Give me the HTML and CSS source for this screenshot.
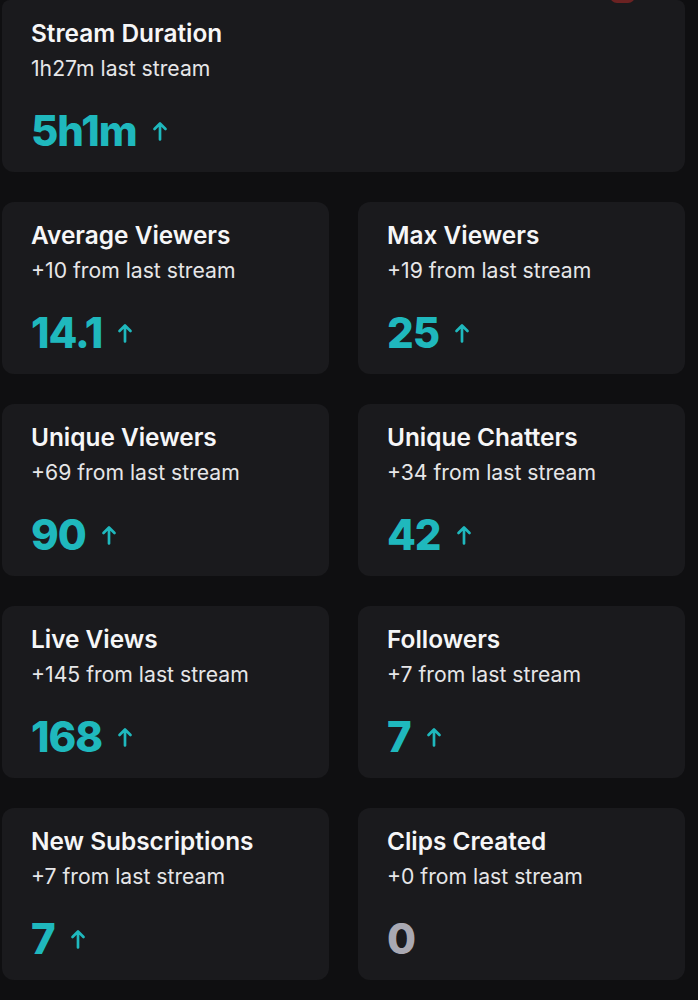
FILE: index.html
```html
<!DOCTYPE html>
<html lang="en">
<head>
    <meta charset="UTF-8">
    <meta name="viewport" content="width=device-width, initial-scale=1.0">
    <title>Stream Stats</title>
    <link rel="stylesheet" href="styles.css">
</head>
<body>
    <div class="grid">
        <div class="card wide">
            <span class="badge"></span>
            <div class="title">Stream Duration</div>
            <div class="sub">1h27m last stream</div>
            <div class="value">5h1m <svg class="arrow" viewBox="0 0 16 20"><path d="M8 18.5V2.5M2.5 8L8 2.5 13.5 8"/></svg></div>
        </div>

        <div class="card">
            <div class="title">Average Viewers</div>
            <div class="sub">+10 from last stream</div>
            <div class="value">14.1 <svg class="arrow" viewBox="0 0 16 20"><path d="M8 18.5V2.5M2.5 8L8 2.5 13.5 8"/></svg></div>
        </div>
        <div class="card">
            <div class="title">Max Viewers</div>
            <div class="sub">+19 from last stream</div>
            <div class="value">25 <svg class="arrow" viewBox="0 0 16 20"><path d="M8 18.5V2.5M2.5 8L8 2.5 13.5 8"/></svg></div>
        </div>

        <div class="card">
            <div class="title">Unique Viewers</div>
            <div class="sub">+69 from last stream</div>
            <div class="value">90 <svg class="arrow" viewBox="0 0 16 20"><path d="M8 18.5V2.5M2.5 8L8 2.5 13.5 8"/></svg></div>
        </div>
        <div class="card">
            <div class="title">Unique Chatters</div>
            <div class="sub">+34 from last stream</div>
            <div class="value">42 <svg class="arrow" viewBox="0 0 16 20"><path d="M8 18.5V2.5M2.5 8L8 2.5 13.5 8"/></svg></div>
        </div>

        <div class="card">
            <div class="title">Live Views</div>
            <div class="sub">+145 from last stream</div>
            <div class="value">168 <svg class="arrow" viewBox="0 0 16 20"><path d="M8 18.5V2.5M2.5 8L8 2.5 13.5 8"/></svg></div>
        </div>
        <div class="card">
            <div class="title">Followers</div>
            <div class="sub">+7 from last stream</div>
            <div class="value">7 <svg class="arrow" viewBox="0 0 16 20"><path d="M8 18.5V2.5M2.5 8L8 2.5 13.5 8"/></svg></div>
        </div>

        <div class="card">
            <div class="title">New Subscriptions</div>
            <div class="sub">+7 from last stream</div>
            <div class="value">7 <svg class="arrow" viewBox="0 0 16 20"><path d="M8 18.5V2.5M2.5 8L8 2.5 13.5 8"/></svg></div>
        </div>
        <div class="card">
            <div class="title">Clips Created</div>
            <div class="sub">+0 from last stream</div>
            <div class="value flat">0</div>
        </div>
    </div>
</body>
</html>
```

FILE: styles.css
```css
body {
    margin: 0;
    background-color: #0f0f11;
    font-family: Inter, 'Noto Sans', sans-serif;
    color: #f2f2f2;
}
.grid {
    display: grid;
    grid-template-columns: 327px 327px;
    column-gap: 29px;
    row-gap: 30px;
    padding-left: 2px;
}
.card {
    position: relative;
    height: 172px;
    box-sizing: border-box;
    padding: 18px 29px 0;
    background-color: #1a1a1d;
    border-radius: 12px;
}
.wide {
    grid-column: 1 / -1;
    border-top-left-radius: 8px;
    border-top-right-radius: 8px;
}
.badge {
    position: absolute;
    top: -16px;
    left: 608px;
    width: 25px;
    height: 19px;
    border-radius: 7px;
    background-color: #6b2222;
}
.title {
    font-size: 24.4px;
    line-height: 30px;
    font-weight: 600;
    color: #f6f6f7;
}
.sub {
    margin-top: 6px;
    font-size: 21.2px;
    line-height: 28px;
    color: #e6e6e8;
}
.value {
    display: flex;
    align-items: center;
    gap: 15px;
    margin-top: 24px;
    font-size: 42px;
    line-height: 50px;
    font-weight: 800;
    letter-spacing: -0.025em;
    color: #1fb8bd;
}
.value.flat {
    color: #a9a9b3;
}
.arrow {
    width: 16px;
    height: 20px;
    fill: none;
    stroke: #1fb8bd;
    stroke-width: 2.7;
    stroke-linecap: round;
    stroke-linejoin: round;
}
```
